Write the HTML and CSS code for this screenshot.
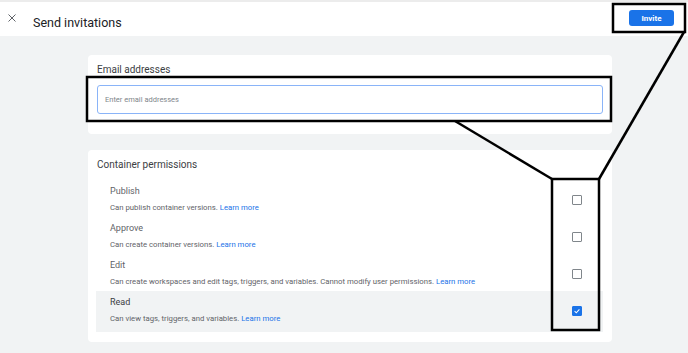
FILE: index.html
```html
<!DOCTYPE html>
<html lang="en">
<head>
  <meta charset="UTF-8">
  <meta name="viewport" content="width=device-width, initial-scale=1.0">
  <title>Send invitations</title>
  <link rel="stylesheet" href="styles.css">
</head>
<body>
  <header class="topbar">
    <button class="close-btn" aria-label="Close">
      <svg width="10" height="10" viewBox="0 0 10 10"><path d="M1.5 1.5L8.5 8.5M8.5 1.5L1.5 8.5" stroke="#5f6368" stroke-width="1" fill="none"/></svg>
    </button>
    <h1 class="title">Send invitations</h1>
    <button class="invite-btn">Invite</button>
  </header>

  <main class="content">
    <section class="card email-card">
      <label class="card-label" for="emails">Email addresses</label>
      <input type="text" id="emails" class="email-input" placeholder="Enter email addresses">
    </section>

    <section class="card perm-card">
      <h2 class="card-title">Container permissions</h2>

      <div class="perm-row">
        <div class="perm-text">
          <div class="perm-name">Publish</div>
          <div class="perm-desc">Can publish container versions. <a href="#">Learn more</a></div>
        </div>
        <span class="checkbox"></span>
      </div>

      <div class="perm-row">
        <div class="perm-text">
          <div class="perm-name">Approve</div>
          <div class="perm-desc">Can create container versions. <a href="#">Learn more</a></div>
        </div>
        <span class="checkbox"></span>
      </div>

      <div class="perm-row">
        <div class="perm-text">
          <div class="perm-name">Edit</div>
          <div class="perm-desc">Can create workspaces and edit tags, triggers, and variables. Cannot modify user permissions. <a href="#">Learn more</a></div>
        </div>
        <span class="checkbox"></span>
      </div>

      <div class="perm-row selected">
        <div class="perm-text">
          <div class="perm-name">Read</div>
          <div class="perm-desc">Can view tags, triggers, and variables. <a href="#">Learn more</a></div>
        </div>
        <span class="checkbox checked">
          <svg width="10" height="10" viewBox="0 0 10 10"><path d="M2 5.2L4.1 7.2L8 3" stroke="#fff" stroke-width="1.3" fill="none"/></svg>
        </span>
      </div>
    </section>
  </main>

  <!-- annotation callouts drawn over the screenshot -->
  <svg class="annotations" width="688" height="353" viewBox="0 0 688 353">
    <g fill="none" stroke="#000" stroke-width="2.5">
      <rect x="613" y="4" width="72" height="28"/>
      <rect x="87" y="77" width="524" height="44"/>
      <rect x="552" y="179" width="47" height="151"/>
      <path d="M455 121L552 179"/>
      <path d="M599 179L684 32"/>
    </g>
  </svg>
</body>
</html>
```

FILE: styles.css
```css
* {
  box-sizing: border-box;
  margin: 0;
  padding: 0;
}

body {
  font-family: Roboto, 'Noto Sans', sans-serif;
  background: #f1f3f4;
  width: 688px;
  height: 353px;
  overflow: hidden;
  position: relative;
}

.topbar {
  height: 36px;
  background: #fff;
  border-top: 2px solid #ececec;
  display: flex;
  align-items: center;
  padding: 0 14px 0 6px;
}

.close-btn {
  background: none;
  border: none;
  width: 12px;
  height: 12px;
  display: flex;
  align-items: center;
  justify-content: center;
  margin-top: -2px;
}

.title {
  font-size: 12.5px;
  font-weight: 400;
  color: #202124;
  margin-left: 15px;
  margin-top: 6px;
  flex: 1;
}

.invite-btn {
  background: #1a73e8;
  color: #fff;
  border: none;
  border-radius: 3px;
  width: 45px;
  height: 16px;
  font-family: Roboto, sans-serif;
  font-size: 8px;
  font-weight: 700;
  margin-top: -2px;
}

.content {
  padding: 19px 0 0 88px;
  display: flex;
  flex-direction: column;
  gap: 16px;
}

.card {
  width: 524px;
  background: #fff;
  border-radius: 4px;
}

.email-card {
  height: 79px;
  padding: 8px 9px 0 9px;
}

.card-label {
  display: block;
  font-size: 10px;
  line-height: 14px;
  color: #3c4043;
  margin-bottom: 8px;
}

.email-input {
  width: 100%;
  height: 29px;
  border: 1px solid #8ab4f8;
  border-radius: 3px;
  padding: 0 7px;
  font-family: Roboto, sans-serif;
  font-size: 7.5px;
  outline: none;
}

.email-input::placeholder {
  color: #80868b;
}

.perm-card {
  height: 192px;
  padding: 8px 9px 0 9px;
}

.card-title {
  font-size: 10px;
  font-weight: 400;
  line-height: 14px;
  color: #3c4043;
  margin-bottom: 8px;
}

.perm-row {
  display: flex;
  align-items: center;
  padding: 4px 21px 2px 14px;
  margin-left: -1px;
}

.perm-row.selected {
  background: #f1f3f4;
  padding-top: 4px;
  padding-bottom: 6px;
}

.perm-text {
  flex: 1;
}

.perm-name {
  font-size: 9px;
  line-height: 14px;
  color: #5f6368;
  margin-bottom: 3px;
}

.selected .perm-name {
  color: #3c4043;
}

.perm-desc {
  font-size: 7.75px;
  line-height: 14px;
  color: #5f6368;
}

.perm-desc a {
  color: #1a73e8;
  text-decoration: none;
}

.checkbox {
  width: 10px;
  height: 10px;
  border: 1.5px solid #80868b;
  border-radius: 1px;
  display: flex;
  align-items: center;
  justify-content: center;
}

.checkbox.checked {
  background: #1a73e8;
  border-color: #1a73e8;
}

.annotations {
  position: absolute;
  left: 0;
  top: 0;
  pointer-events: none;
}
```
